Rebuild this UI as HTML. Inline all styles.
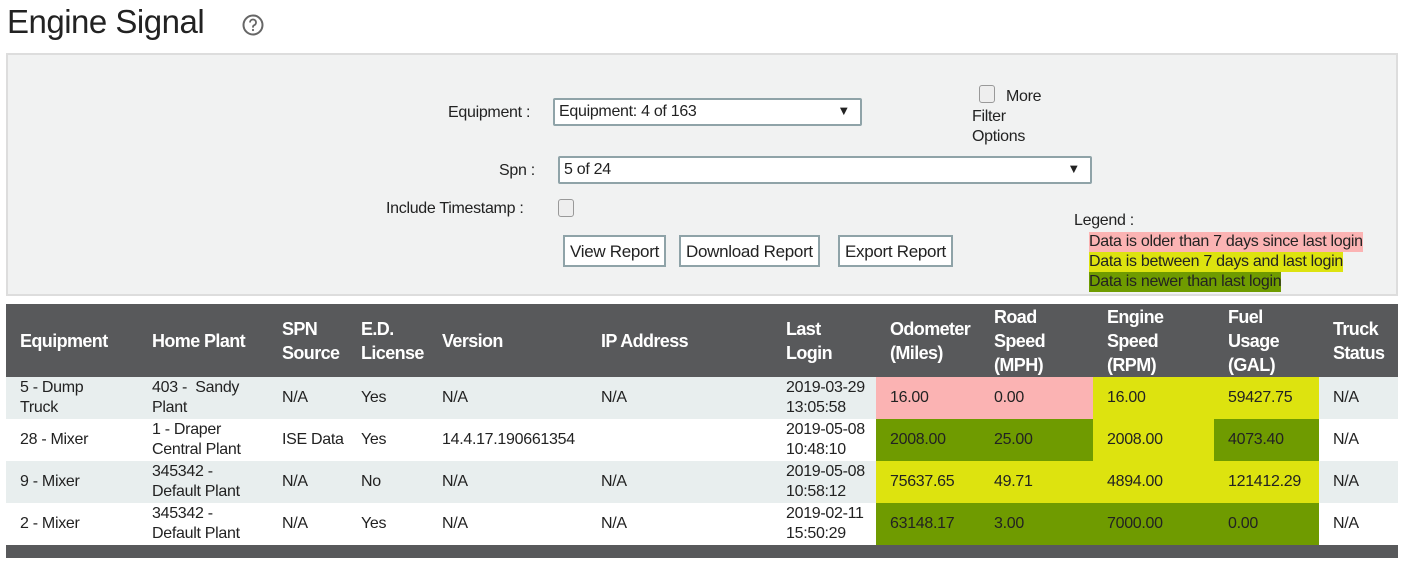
<!DOCTYPE html>
<html><head><meta charset="utf-8"><style>
*{box-sizing:border-box;margin:0;padding:0}
body{width:1408px;height:569px;background:#fff;font-family:"Liberation Sans",Arial,sans-serif;color:#222;position:relative;overflow:hidden;font-size:16px;letter-spacing:-0.3px}
.a{position:absolute;white-space:nowrap}
h1{position:absolute;left:7px;top:3px;font-size:33px;font-weight:normal;color:#222;letter-spacing:-0.5px}
.panel{position:absolute;left:6px;top:53px;width:1392px;height:243px;background:#f1f2f2;border:2px solid #ddd}
.sel{position:absolute;background:#fff;border:2px solid #8fa3a8;border-radius:2px;height:28px;padding:3px 4px;font-size:16px}
.sel span{position:absolute;right:10px;top:3px;font-size:13px}
.cb{position:absolute;width:16px;height:18px;border:1px solid #999;border-radius:3px;background:#eee}
.btn{position:absolute;top:235px;height:32px;border:2px solid #8fa3a8;background:#fff;padding:5px 5px;font-size:17px}
table{position:absolute;left:6px;top:304px;width:1392px;border-collapse:collapse;table-layout:fixed}
th{background:#58595b;color:#fff;font-weight:bold;text-align:left;padding:0 0 0 14px;height:73px;font-size:18px;line-height:24px;letter-spacing:-0.6px}
td{padding:0 0 0 14px;height:42px;font-size:16px;line-height:20px;vertical-align:middle}
tr.g td{background:#e8eeee}
td.p{background:#fbb3b3}td.y{background:#dde30f}td.n{background:#6f9b00}
tr.g td.p{background:#fbb3b3}tr.g td.y{background:#dde30f}tr.g td.n{background:#6f9b00}
.foot{position:absolute;left:6px;top:545px;width:1392px;height:13px;background:#58595b}
</style></head><body>
<h1>Engine Signal</h1>
<svg class="a" style="left:242px;top:14px" width="22" height="22" viewBox="0 0 22 22"><circle cx="11" cy="11" r="9.5" fill="none" stroke="#666" stroke-width="2"/><path d="M8 8.5a3 3 0 1 1 4 2.8c-.8.4-1 .9-1 1.7v.6" fill="none" stroke="#666" stroke-width="1.8"/><circle cx="11" cy="16" r="1.1" fill="#666"/></svg>
<div class="panel"></div>
<div class="a" style="left:448px;top:104px">Equipment :</div>
<div class="sel" style="left:553px;top:98px;width:309px">Equipment: 4 of 163<span>▼</span></div>
<div class="cb" style="left:979px;top:85px"></div>
<div class="a" style="left:1006px;top:88px">More</div>
<div class="a" style="left:972px;top:108px">Filter</div>
<div class="a" style="left:972px;top:128px">Options</div>
<div class="a" style="left:499px;top:162px">Spn :</div>
<div class="sel" style="left:558px;top:156px;width:534px">5 of 24<span>▼</span></div>
<div class="a" style="left:386px;top:200px">Include Timestamp :</div>
<div class="cb" style="left:558px;top:199px"></div>
<div class="btn" style="left:563px">View Report</div>
<div class="btn" style="left:679px">Download Report</div>
<div class="btn" style="left:838px">Export Report</div>
<div class="a" style="left:1074px;top:212px">Legend :</div>
<div class="a" style="left:1089px;top:232px;background:#fbb3b3;height:20px;line-height:20px">Data is older than 7 days since last login</div>
<div class="a" style="left:1089px;top:252px;background:#dde30f;height:20px;line-height:20px">Data is between 7 days and last login</div>
<div class="a" style="left:1089px;top:272px;background:#6f9b00;height:20px;line-height:20px">Data is newer than last login</div>
<table>
<colgroup><col style="width:132px"><col style="width:130px"><col style="width:79px"><col style="width:81px"><col style="width:159px"><col style="width:185px"><col style="width:104px"><col style="width:104px"><col style="width:113px"><col style="width:121px"><col style="width:105px"><col style="width:79px"></colgroup>
<tr><th>Equipment</th><th>Home Plant</th><th>SPN<br>Source</th><th>E.D.<br>License</th><th>Version</th><th>IP Address</th><th>Last<br>Login</th><th>Odometer<br>(Miles)</th><th>Road<br>Speed<br>(MPH)</th><th>Engine<br>Speed<br>(RPM)</th><th>Fuel<br>Usage<br>(GAL)</th><th>Truck<br>Status</th></tr>
<tr class="g"><td>5 - Dump<br>Truck</td><td>403 - &nbsp;Sandy<br>Plant</td><td>N/A</td><td>Yes</td><td>N/A</td><td>N/A</td><td>2019-03-29<br>13:05:58</td><td class="p">16.00</td><td class="p">0.00</td><td class="y">16.00</td><td class="y">59427.75</td><td>N/A</td></tr>
<tr><td>28 - Mixer</td><td>1 - Draper<br>Central Plant</td><td>ISE Data</td><td>Yes</td><td>14.4.17.190661354</td><td></td><td>2019-05-08<br>10:48:10</td><td class="n">2008.00</td><td class="n">25.00</td><td class="y">2008.00</td><td class="n">4073.40</td><td>N/A</td></tr>
<tr class="g"><td>9 - Mixer</td><td>345342 -<br>Default Plant</td><td>N/A</td><td>No</td><td>N/A</td><td>N/A</td><td>2019-05-08<br>10:58:12</td><td class="y">75637.65</td><td class="y">49.71</td><td class="y">4894.00</td><td class="y">121412.29</td><td>N/A</td></tr>
<tr><td>2 - Mixer</td><td>345342 -<br>Default Plant</td><td>N/A</td><td>Yes</td><td>N/A</td><td>N/A</td><td>2019-02-11<br>15:50:29</td><td class="n">63148.17</td><td class="n">3.00</td><td class="n">7000.00</td><td class="n">0.00</td><td>N/A</td></tr>
</table>
<div class="foot"></div>
</body></html>
